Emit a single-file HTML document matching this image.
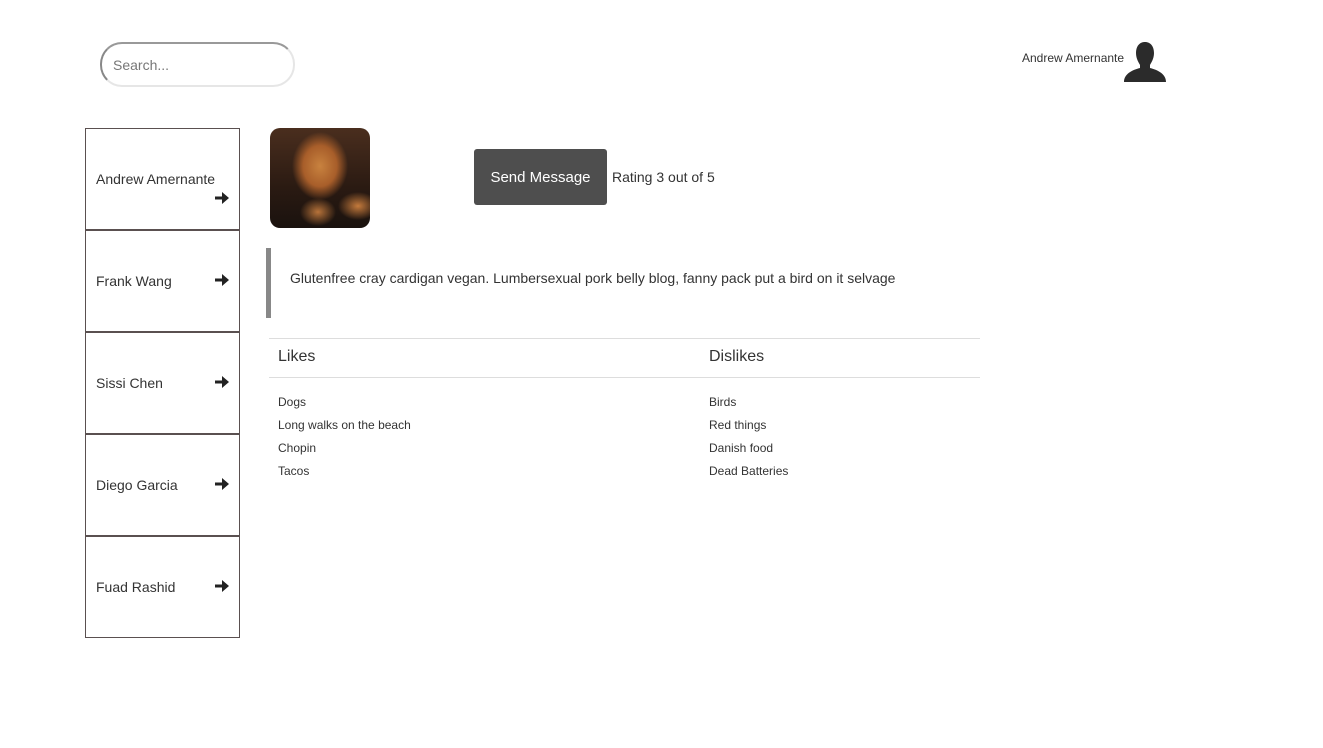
<!DOCTYPE html>
<html><head><meta charset="utf-8"><style>
body{margin:0;width:1323px;height:748px;background:#fff;font-family:"Liberation Sans",Arial,sans-serif;color:#333;position:relative;overflow:hidden}
.a{position:absolute}
.search{left:100px;top:42px;width:195px;height:45px;box-sizing:border-box;border:2px solid #e6e6e6;border-left-color:#888;border-top-color:#999;border-radius:22px;font-size:14px;color:#777;padding:13px 0 0 11px}
.side{left:85px;width:155px;height:102px;box-sizing:border-box;border:1px solid #5a5050;font-size:14px}
.side span{position:absolute;left:10px}
.arr{position:absolute;right:10px;width:14px;height:12px}
.img{left:270px;top:128px;width:100px;height:100px;border-radius:10px;overflow:hidden;
background:radial-gradient(ellipse 28px 34px at 50% 38%,#c8823f 0,#a85e2a 60%,transparent 100%),radial-gradient(ellipse 20px 14px at 88% 78%,#c47a3c 0,transparent 100%),radial-gradient(ellipse 18px 14px at 48% 84%,#b7733a 0,transparent 100%),linear-gradient(180deg,#4a2e1e,#2a1a12 60%,#1a120e)}
.btn{left:474px;top:149px;width:133px;height:56px;background:#4e4e4e;border-radius:3px;color:#fff;font-size:15px;text-align:center;line-height:56px;padding-top:1px;box-sizing:border-box}
.li{font-size:12px}
</style></head><body>
<div class="a search">Search...</div>
<div class="a" style="left:1022px;top:51px;font-size:12px">Andrew Amernante</div>
<svg class="a" style="left:1124px;top:42px" width="42" height="40" viewBox="0 0 42 40"><path d="M21 0c6 0 9 5 9 11s-3 10-4 12v3c8 2 16 6 16 14H0c0-8 8-12 16-14v-3c-1-2-4-6-4-12S15 0 21 0z" fill="#2b2b2b"/></svg>

<div class="a side" style="top:128px"><span style="top:42px">Andrew Amernante</span><svg class="arr" style="top:63px" viewBox="0 0 14 12"><path d="M0 4.5h7V0l7 6-7 6V7.5H0z" fill="#222"/></svg></div>
<div class="a side" style="top:230px"><span style="top:42px">Frank Wang</span><svg class="arr" style="top:43px" viewBox="0 0 14 12"><path d="M0 4.5h7V0l7 6-7 6V7.5H0z" fill="#222"/></svg></div>
<div class="a side" style="top:332px"><span style="top:42px">Sissi Chen</span><svg class="arr" style="top:43px" viewBox="0 0 14 12"><path d="M0 4.5h7V0l7 6-7 6V7.5H0z" fill="#222"/></svg></div>
<div class="a side" style="top:434px"><span style="top:42px">Diego Garcia</span><svg class="arr" style="top:43px" viewBox="0 0 14 12"><path d="M0 4.5h7V0l7 6-7 6V7.5H0z" fill="#222"/></svg></div>
<div class="a side" style="top:536px"><span style="top:42px">Fuad Rashid</span><svg class="arr" style="top:43px" viewBox="0 0 14 12"><path d="M0 4.5h7V0l7 6-7 6V7.5H0z" fill="#222"/></svg></div>

<div class="a img"></div>
<div class="a btn">Send Message</div>
<div class="a" style="left:612px;top:169px;font-size:14px">Rating 3 out of 5</div>

<div class="a" style="left:266px;top:248px;width:5px;height:70px;background:#888"></div>
<div class="a" style="left:290px;top:270px;font-size:14px">Glutenfree cray cardigan vegan. Lumbersexual pork belly blog, fanny pack put a bird on it selvage</div>

<div class="a" style="left:269px;top:338px;width:711px;height:1px;background:#ddd"></div>
<div class="a" style="left:278px;top:348px;font-size:16px">Likes</div>
<div class="a" style="left:709px;top:348px;font-size:16px">Dislikes</div>
<div class="a" style="left:269px;top:377px;width:711px;height:1px;background:#ddd"></div>

<div class="a li" style="left:278px;top:395px">Dogs</div>
<div class="a li" style="left:278px;top:418px">Long walks on the beach</div>
<div class="a li" style="left:278px;top:441px">Chopin</div>
<div class="a li" style="left:278px;top:464px">Tacos</div>
<div class="a li" style="left:709px;top:395px">Birds</div>
<div class="a li" style="left:709px;top:418px">Red things</div>
<div class="a li" style="left:709px;top:441px">Danish food</div>
<div class="a li" style="left:709px;top:464px">Dead Batteries</div>
</body></html>
